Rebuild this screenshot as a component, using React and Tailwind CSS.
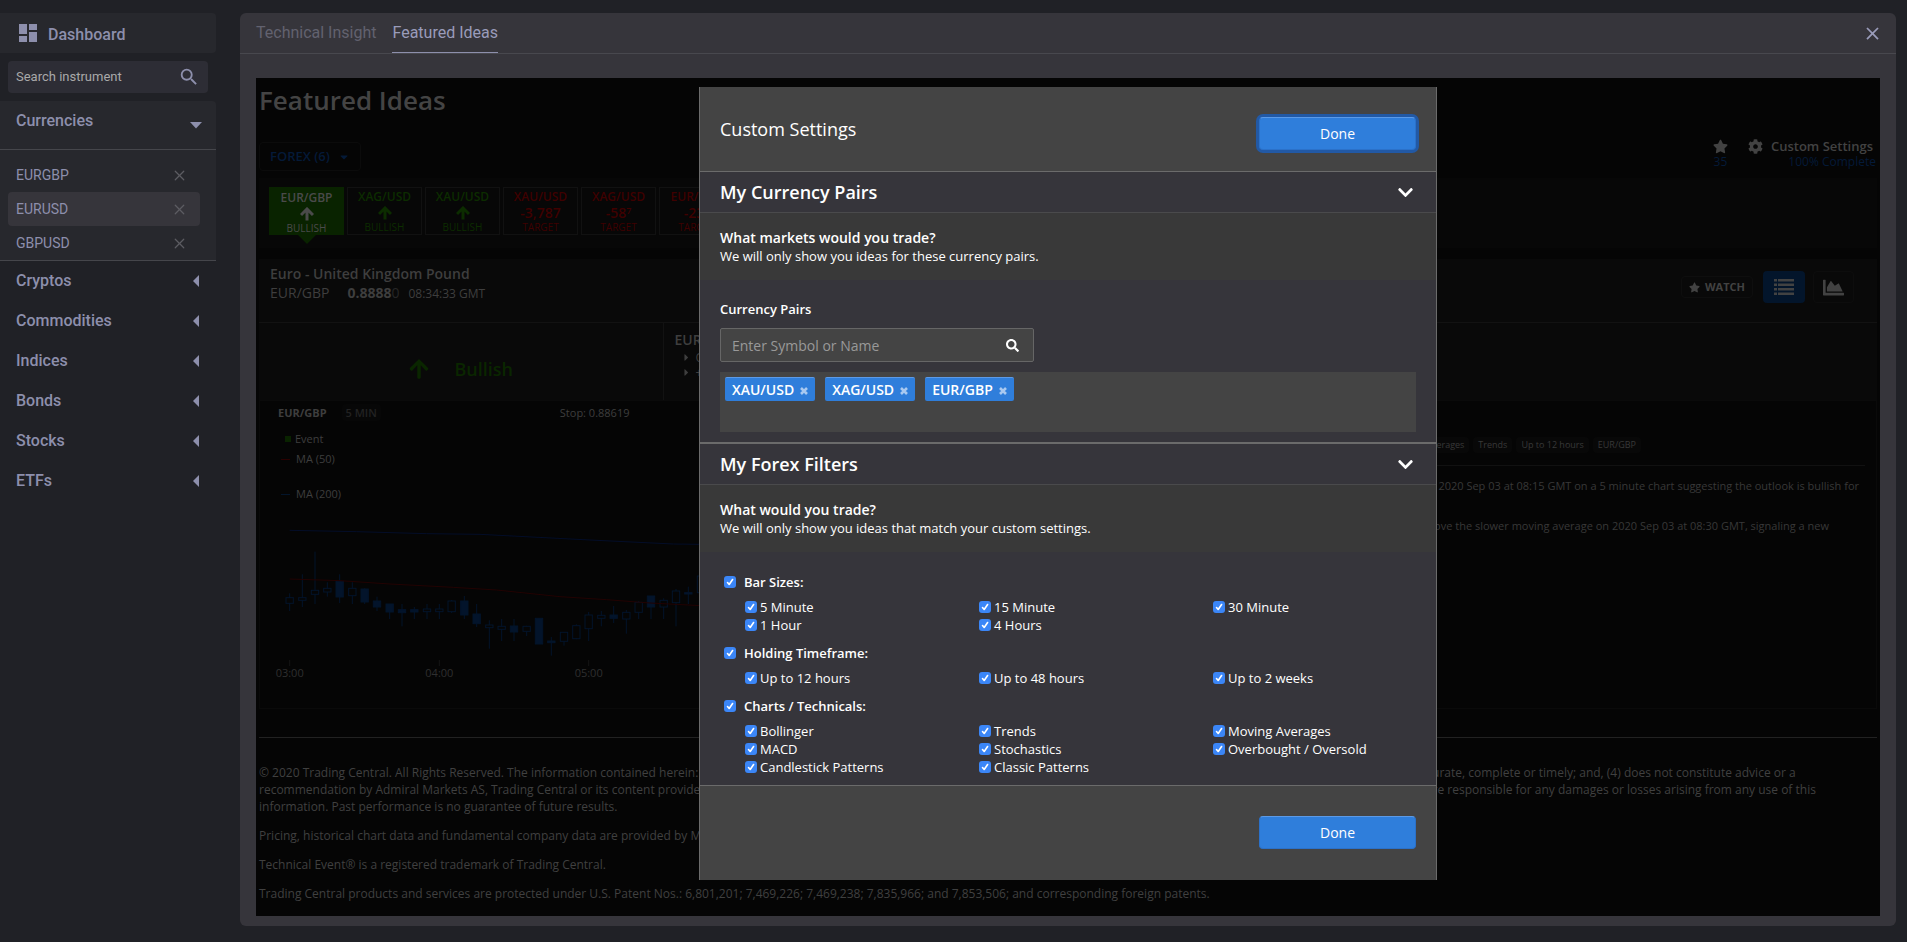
import { FaArrowUp, FaCaretDown, FaCaretRight, FaChartArea, FaChevronDown, FaCog, FaSearch, FaStar } from 'react-icons/fa'
import { MdClose, MdDashboard, MdSearch } from 'react-icons/md'
import { X } from 'lucide-react'

const pairs = [
  { symbol: 'EURGBP', active: false },
  { symbol: 'EURUSD', active: true },
  { symbol: 'GBPUSD', active: false },
]

const categories = ['Cryptos', 'Commodities', 'Indices', 'Bonds', 'Stocks', 'ETFs']

const ideas = [
  { pair: 'XAG/USD', type: 'BULLISH' },
  { pair: 'XAU/USD', type: 'BULLISH' },
  { pair: 'XAU/USD', type: 'TARGET', value: '-3,787' },
  { pair: 'XAG/USD', type: 'TARGET', value: '-58', sup: '7' },
  { pair: 'EUR/GBP', type: 'TARGET', value: '-23', sup: '0' },
]

const selectedPairs = ['XAU/USD', 'XAG/USD', 'EUR/GBP']

const filterGroups = [
  { title: 'Bar Sizes:', options: ['5 Minute', '15 Minute', '30 Minute', '1 Hour', '4 Hours'] },
  { title: 'Holding Timeframe:', options: ['Up to 12 hours', 'Up to 48 hours', 'Up to 2 weeks'] },
  {
    title: 'Charts / Technicals:',
    options: [
      'Bollinger', 'Trends', 'Moving Averages',
      'MACD', 'Stochastics', 'Overbought / Oversold',
      'Candlestick Patterns', 'Classic Patterns',
    ],
  },
]

// x, high, body top, body bottom, low, filled
const candles = [
  [149, 190, 203, 220, 243, 0], [187, 133, 203, 211, 231, 0], [225, 65, 181, 193, 222, 0],
  [262, 157, 175, 186, 200, 0], [299, 133, 154, 201, 219, 1], [337, 157, 175, 197, 222, 0],
  [374, 175, 177, 216, 222, 1], [411, 200, 213, 231, 243, 1], [449, 222, 222, 246, 267, 1],
  [486, 222, 239, 248, 289, 1], [523, 231, 239, 246, 267, 1], [561, 222, 237, 245, 267, 0],
  [598, 222, 237, 245, 267, 0], [635, 210, 213, 245, 249, 0], [673, 198, 213, 255, 267, 1],
  [710, 222, 252, 281, 291, 1], [748, 271, 285, 293, 356, 0], [785, 267, 289, 298, 333, 0],
  [822, 267, 288, 306, 333, 1], [860, 287, 289, 304, 318, 0], [897, 264, 265, 342, 342, 1],
  [934, 321, 333, 338, 377, 1], [972, 307, 307, 334, 347, 0], [1009, 283, 287, 326, 328, 0],
  [1046, 246, 255, 296, 333, 0], [1084, 243, 256, 265, 289, 0], [1121, 228, 255, 265, 279, 1],
  [1159, 240, 247, 267, 311, 0], [1196, 213, 217, 247, 267, 0], [1233, 198, 198, 231, 267, 1],
  [1271, 205, 211, 231, 267, 0], [1308, 177, 183, 218, 289, 0], [1345, 170, 188, 192, 222, 1],
  [1383, 120, 138, 188, 200, 0],
]

const ticks = [
  { x: 149, label: '03:00' },
  { x: 598, label: '04:00' },
  { x: 1046, label: '05:00' },
]

function Sidebar() {
  return (
    <aside className="w-60 shrink-0 pt-[13px] font-['Roboto',sans-serif] text-[#8d8fac]">
      <div className="w-[216px]">
        <a href="#dashboard" className="flex h-10 items-center gap-2 rounded-r bg-[#27282d] pl-4">
          <MdDashboard size={24} />
          <span className="pt-1 text-base font-medium">Dashboard</span>
        </a>

        <div className="mx-2 mt-2 flex h-8 items-center rounded bg-[#2d2d35] pr-2 pl-2">
          <input
            type="text"
            aria-label="Search instrument"
            placeholder="Search instrument"
            className="min-w-0 flex-1 bg-transparent text-[13px] outline-none placeholder:text-[#a9a9a9]"
          />
          <MdSearch size={22} />
        </div>

        <div className="mt-2 rounded-tr border-b border-[#45464b] bg-[#27282d]">
          <button className="flex h-[49px] w-full items-center justify-between border-b border-[#45464b] pr-3.5 pl-4">
            <span className="pb-2 text-base font-medium">Currencies</span>
            <svg width="12" height="7" viewBox="0 0 12 7" fill="currentColor"><path d="M0 0h12L6 6.5z" /></svg>
          </button>
          <ul className="pt-2">
            {pairs.map(({ symbol, active }) => (
              <li
                key={symbol}
                className={`mr-4 ml-2 flex h-[34px] items-center justify-between rounded pr-3 pl-2 ${active ? 'bg-[#36353b]' : ''}`}
              >
                <a href={`#${symbol}`} className="text-sm">{symbol}</a>
                <button aria-label={`Remove ${symbol}`} className="text-[#5c5c62]"><X size={17} strokeWidth={1.7} /></button>
              </li>
            ))}
          </ul>
        </div>

        {categories.map((name) => (
          <button key={name} className="flex h-10 w-full items-center justify-between pr-[17px] pl-4">
            <span className="text-base font-medium">{name}</span>
            <svg width="6" height="12" viewBox="0 0 6 12" fill="currentColor"><path d="M6 0v12L0 6z" /></svg>
          </button>
        ))}
      </div>
    </aside>
  )
}

function ThinArrow() {
  return (
    <svg width="14" height="14" viewBox="0 0 14 14" fill="none" stroke="currentColor" strokeWidth="3" className="mx-auto">
      <path d="M1 8l6-6 6 6M7 3v10.500" />
    </svg>
  )
}

function IdeaStrip() {
  return (
    <div className="mt-[7px] flex gap-[3px] bg-[#070707] px-2.5 pt-[9px] pb-[13px]">
      <button className="relative h-12 w-[75px] bg-[#092300] pt-px text-[#4a4a4a]">
        <span className="block text-[12px] leading-[18px] font-semibold">EUR/GBP</span>
        <ThinArrow />
        <span className="block text-[10px] leading-[14px]">BULLISH</span>
        <svg width="18" height="9" viewBox="0 0 18 9" className="absolute top-full left-1/2 -translate-x-1/2"><path d="M0 0h18L9 9z" fill="#092300" /></svg>
      </button>
      {ideas.map((idea, i) => (
        <button
          key={i}
          className={`h-12 w-[75px] border border-[#111] ${idea.value ? 'text-[#3f0000]' : 'text-[#0c2c00]'}`}
        >
          <span className="block text-[12px] leading-[18px] font-semibold">{idea.pair}</span>
          {idea.value ? (
            <span className="block text-[14px] leading-[14px] font-semibold">
              {idea.value}
              {idea.sup && <sup className="text-[9px]">{idea.sup}</sup>}
            </span>
          ) : (
            <ThinArrow />
          )}
          <span className="block text-[10px] leading-[14px]">{idea.type}</span>
        </button>
      ))}
    </div>
  )
}

function PriceChart() {
  return (
    <svg width="440" height="164" viewBox="60 -12 1320 492">
      <polyline points="149,1 350,5 560,11 720,13 1050,30 1300,42 1383,43" fill="none" stroke="#030d28" strokeWidth="3" />
      {candles.map(([x, high, top, bottom, low, filled]) => (
        <g key={x} stroke="#03142b" strokeWidth="3">
          <path d={`M${x} ${high}V${top}M${x} ${bottom}V${low}`} />
          <rect x={x - 11} y={top} width="22" height={bottom - top} fill={filled ? '#03142b' : 'none'} />
        </g>
      ))}
      <polyline points="149,147 300,152 450,162 640,172 770,180 960,200 1100,209 1230,219 1383,227" fill="none" stroke="#220202" strokeWidth="3" />
      {ticks.map(({ x, label }) => (
        <g key={label}>
          <path d={`M${x} 390V408`} stroke="#151515" strokeWidth="3" />
          <text x={x} y="441" textAnchor="middle" fontSize="33" fill="#2f2f2f">{label}</text>
        </g>
      ))}
    </svg>
  )
}

function Tag({ children }) {
  return <span className="rounded-sm bg-[#080808] px-[5px] text-[9px] leading-4">{children}</span>
}

function IdeaDetail() {
  return (
    <section className="mt-[11px] bg-[#090909] text-[#3e3e3e]">
      <div className="flex h-16 items-start justify-between border-b border-[#121212] pt-[5px] pr-[23px] pl-[11px]">
        <div>
          <h2 className="text-[14px] leading-5 font-semibold">Euro - United Kingdom Pound</h2>
          <p className="flex items-baseline text-[14px] leading-[18px]">
            <span className="mr-[18px]">EUR/GBP</span>
            <span className="font-bold">0.8888</span>
            <span className="mr-[9px] text-[#262626]">0</span>
            <span className="text-[12px]">08:34:33 GMT</span>
          </p>
        </div>
        <div className="flex items-center gap-2 pt-[7px] text-[#424242]">
          <button className="mr-0.5 flex h-[22px] items-center gap-[5px] rounded-sm border border-[#0e0e0e] px-[7px] text-[11px] font-bold">
            <FaStar size={11} />WATCH
          </button>
          <button aria-label="List view" className="flex h-8 w-[42px] items-center justify-center rounded bg-[#03152b]">
            <svg width="20" height="16" viewBox="0 0 20 16" fill="currentColor">
              <path d="M0 0h3v2.500H0zM4 0h16v2.500H4zM0 4.500h3V7H0zM4 4.500h16V7H4zM0 9h3v2.500H0zM4 9h16v2.500H4zM0 13.500h3V16H0zM4 13.500h16V16H4z" />
            </svg>
          </button>
          <button aria-label="Chart view" className="flex h-8 w-[41px] items-center justify-center rounded border border-[#0d0d0d]">
            <FaChartArea size={21} />
          </button>
        </div>
      </div>

      <div className="flex h-[77px]">
        <div className="flex w-1/4 items-center justify-center gap-6 border-r border-[#121212] pt-3.5 text-[#0a2600]">
          <FaArrowUp size={22} />
          <span className="text-lg font-semibold">Bullish</span>
        </div>
        <div className="pt-[7px] pl-[11px]">
          <h3 className="text-[14px] leading-5 font-semibold">EUR/GBP</h3>
          <ul className="pl-1.5 text-[12px] leading-[15px]">
            <li className="flex items-center gap-1"><FaCaretRight size={11} />Opportunity is bullish</li>
            <li className="flex items-center gap-1"><FaCaretRight size={11} />+0.00080 since the event</li>
          </ul>
        </div>
      </div>

      <div className="flex h-[309px] border border-[#0a0a0a] bg-[#050505]">
        <div className="w-1/2">
          <div className="flex items-center pt-[3px] pl-[18px] text-[11px] leading-[17px]">
            <span className="mr-[15px] font-bold">EUR/GBP</span>
            <span className="mr-[179px] rounded-sm bg-[#070707] px-1 font-semibold text-[#222]">5 MIN</span>
            <span>Stop: 0.88619</span>
          </div>
          <ul className="pt-2 pl-[21px] text-[11px] leading-5">
            <li className="flex items-center pl-1"><span className="mr-1 size-1.5 bg-[#092300]" />Event</li>
            <li className="flex items-center"><span className="mr-1.5 h-px w-[9px] bg-[#2a0000]" />MA (50)</li>
            <li className="mt-[15px] flex items-center"><span className="mr-1.5 h-px w-[9px] bg-[#03152b]" />MA (200)</li>
          </ul>
          <div className="mt-[22px]"><PriceChart /></div>
        </div>
        <article className="w-1/2 pt-9 pr-[11px] pl-3 text-[#383838]">
          <div className="flex justify-end gap-1 border-b border-[#111] pr-56 pb-3">
            <Tag>Moving Averages</Tag>
            <Tag>Trends</Tag>
            <Tag>Up to 12 hours</Tag>
            <Tag>EUR/GBP</Tag>
          </div>
          <p className="mt-2.5 pr-1.5 text-right text-[11px] leading-5">
            A moving average cross was confirmed for EUR/GBP on 2020 Sep 03 at 08:15 GMT on a 5 minute chart suggesting the outlook is bullish for
          </p>
          <p className="mt-5 pr-9 text-right text-[11px] leading-5">
            The faster moving average crossed above the slower moving average on 2020 Sep 03 at 08:30 GMT, signaling a new
          </p>
        </article>
      </div>
    </section>
  )
}

function Legal() {
  return (
    <footer className="mt-7 flex flex-col gap-3 border-t border-[#222] pt-[26px] pb-3.5 text-[12px] leading-[17px] text-[#404040]">
      <p className="pr-[60px]">
        © 2020 Trading Central. All Rights Reserved. The information contained herein: (1) is proprietary to Trading Central and/or its content providers; (2) may not be copied or distributed; (3) is not warranted to be accurate, complete or timely; and, (4) does not constitute advice or a recommendation by Admiral Markets AS, Trading Central or its content providers in respect of the investment in any financial instruments. Neither Admiral Markets AS, Trading Central nor its content providers are responsible for any damages or losses arising from any use of this information. Past performance is no guarantee of future results.
      </p>
      <p>Pricing, historical chart data and fundamental company data are provided by Morningstar Inc.</p>
      <p>Technical Event® is a registered trademark of Trading Central.</p>
      <p>Trading Central products and services are protected under U.S. Patent Nos.: 6,801,201; 7,469,226; 7,469,238; 7,835,966; and 7,853,506; and corresponding foreign patents.</p>
    </footer>
  )
}

function Checkbox({ label, heading = false }) {
  return (
    <label className={heading ? 'flex items-center gap-2 text-[13px] leading-[18px] font-semibold' : 'flex items-center gap-[3px] text-[13px] leading-[18px]'}>
      <span className="grid">
        <input type="checkbox" defaultChecked className="peer col-start-1 row-start-1 size-3 appearance-none rounded-[3px] bg-white checked:bg-[#3b86f7]" />
        <svg viewBox="0 0 12 12" fill="none" stroke="white" strokeWidth="1.6" strokeLinecap="round" strokeLinejoin="round" className="pointer-events-none invisible col-start-1 row-start-1 size-3 peer-checked:visible">
          <path d="M3.500 6.500L5.200 8.500L8.600 3.500" />
        </svg>
      </span>
      {label}
    </label>
  )
}

function SectionHead({ title, question, hint }) {
  return (
    <>
      <button className="flex h-[41px] w-full items-center justify-between border-b border-[#4a4a4c] bg-[#36353b] pr-[22px] pl-5">
        <span className="text-lg font-semibold">{title}</span>
        <FaChevronDown size={17} />
      </button>
      <div className="bg-[#393939] px-5 pt-4 pb-[15px]">
        <h3 className="text-[14px] leading-[18px] font-semibold">{question}</h3>
        <p className="text-[13px] leading-[18px]">{hint}</p>
      </div>
    </>
  )
}

function DoneButton({ focused = false }) {
  return (
    <button
      className={`h-[33px] w-[157px] rounded-sm border border-[#2b71c9] border-t-[#5c9ae6] bg-[#2f7edb] text-[14px] ${focused ? 'ring-3 ring-[#2259a5]' : ''}`}
    >
      Done
    </button>
  )
}

function CustomSettings() {
  return (
    <div role="dialog" aria-label="Custom Settings" className="w-[738px] border-x border-[#6b6b6b] bg-[#36353b] text-white">
      <div className="flex items-start justify-between border-b border-[#6b6b6b] bg-[#444] pt-[30px] pr-5 pb-[21px] pl-5">
        <h2 className="text-lg leading-6">Custom Settings</h2>
        <DoneButton focused />
      </div>

      <SectionHead
        title="My Currency Pairs"
        question="What markets would you trade?"
        hint="We will only show you ideas for these currency pairs."
      />
      <div className="border-b-2 border-[#6b6b6b] px-5 pt-5 pb-2.5">
        <label htmlFor="pair-search" className="block text-[13px] leading-[18px] font-semibold">Currency Pairs</label>
        <div className="mt-2.5 flex h-[34px] w-[314px] items-center rounded-xs border border-[#666] bg-[#444] pr-3.5 pl-[11px]">
          <input
            id="pair-search"
            type="text"
            placeholder="Enter Symbol or Name"
            className="min-w-0 flex-1 bg-transparent text-[14px] outline-none placeholder:text-[#999]"
          />
          <FaSearch size={13} />
        </div>
        <div className="mt-2.5 flex h-[60px] items-start gap-2.5 bg-[#444] p-[5px]">
          {selectedPairs.map((pair) => (
            <span key={pair} className="flex h-6 items-center gap-1.5 rounded-xs border-t border-[#5c9ae6] bg-[#2f7edb] px-[7px] text-[14px] font-semibold">
              {pair}
              <button aria-label={`Remove ${pair}`} className="pt-0.5 text-[#a9c9f0]">
                <svg width="8" height="8" viewBox="0 0 8 8" stroke="currentColor" strokeWidth="2.600"><path d="M1 1l6 6M7 1L1 7" /></svg>
              </button>
            </span>
          ))}
        </div>
      </div>

      <SectionHead
        title="My Forex Filters"
        question="What would you trade?"
        hint="We will only show you ideas that match your custom settings."
      />
      <div className="flex flex-col gap-2.5 pt-[21px] pb-[9px] pl-6">
        {filterGroups.map(({ title, options }) => (
          <fieldset key={title}>
            <Checkbox label={title} heading />
            <div className="mt-[7px] grid grid-cols-[234px_234px_1fr] pl-[21px]">
              {options.map((option) => <Checkbox key={option} label={option} />)}
            </div>
          </fieldset>
        ))}
      </div>

      <div className="flex justify-end border-t border-[#6b6b6b] bg-[#444] pt-[30px] pr-5 pb-[31px]">
        <DoneButton />
      </div>
    </div>
  )
}

function FeaturedIdeas() {
  return (
    <div className="relative bg-[#050505] px-[3px] font-['Open_Sans',sans-serif]">
      <h1 className="text-[26px] leading-[44px] font-semibold text-[#444]">Featured Ideas</h1>
      <div className="mt-[17px] flex h-8 items-start justify-between">
        <button className="flex h-[29px] items-center gap-2 self-end rounded-sm border border-[#0b0b0b] px-2.5 text-[13px] font-semibold text-[#041a38]">
          FOREX (6) <FaCaretDown size={12} />
        </button>
        <div className="flex gap-5 pr-px leading-[15px] text-[#424242]">
          <a href="#watchlist" className="flex flex-col items-center text-[12px]">
            <FaStar size={15} />
            <span className="text-[#041a38]">35</span>
          </a>
          <FaCog size={15} />
          <a href="#settings" className="-ml-3 flex flex-col items-end text-[12px]">
            <span className="pr-[3px] text-[13px] font-semibold">Custom Settings</span>
            <span className="text-[#041a38]">100% Complete</span>
          </a>
        </div>
      </div>
      <IdeaStrip />
      <IdeaDetail />
      <Legal />
      <div className="absolute inset-x-0 top-[9px] flex justify-center">
        <CustomSettings />
      </div>
    </div>
  )
}

function App() {
  return (
    <div className="flex min-h-screen items-start bg-[#202126]">
      <Sidebar />
      <main className="mt-[13px] mr-[11px] mb-4 min-w-0 flex-1 rounded-md bg-[#36353b]">
        <nav className="flex h-[41px] items-start border-b border-[#48484e] pr-[13px] pl-4 font-['Roboto',sans-serif] text-base">
          <a href="#technical-insight" className="mr-4 flex h-10 items-center text-[#62626f]">Technical Insight</a>
          <a href="#featured-ideas" className="flex h-10 items-center border-b border-[#8d8fac] text-[#9a9cba]">Featured Ideas</a>
          <button aria-label="Close" className="ml-auto flex h-10 items-center text-[#9a9cba]"><MdClose size={21} /></button>
        </nav>
        <div className="px-4 pt-6 pb-2.5">
          <FeaturedIdeas />
        </div>
      </main>
    </div>
  )
}

export default App
